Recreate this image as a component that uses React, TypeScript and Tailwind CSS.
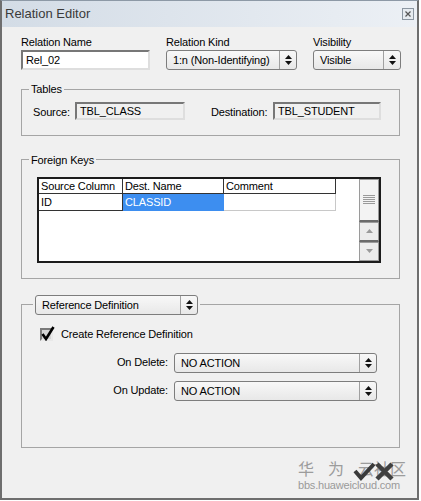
import React from 'react'

// up/down spinner glyph used on the combo boxes
const SpinArrows: React.FC = () => (
  <svg width="7" height="10" viewBox="0 0 7 10">
    <path d="M3.5 0 L7 4 L0 4 Z" fill="#111" />
    <path d="M0 6 L7 6 L3.5 10 Z" fill="#111" />
  </svg>
)

const Combo: React.FC<{ value: string; className?: string }> = ({ value, className = '' }) => (
  <div
    className={`flex h-[20px] items-stretch rounded-[3px] border border-[#7d7d7d] bg-linear-to-b from-[#f8f8f8] to-[#e8e8e8] ${className}`}
  >
    <span className="flex-1 truncate pl-[6px] leading-[18px]">{value}</span>
    <span className="flex w-[17px] items-center justify-center border-l border-[#a0a0a0]">
      <SpinArrows />
    </span>
  </div>
)

const Field: React.FC<{ value: string; readOnly?: boolean; className?: string }> = ({
  value,
  readOnly = false,
  className = '',
}) => (
  <div
    className={`border-2 border-t-[#777] border-l-[#777] border-r-[#dedede] border-b-[#dedede] pl-[3px] ${
      readOnly ? 'bg-[#f0f0f0]' : 'bg-white'
    } ${className}`}
  >
    {value}
  </div>
)

export default function App() {
  return (
    <div className="w-[421px] h-[501px] bg-white font-['Liberation_Sans',Arial,sans-serif] text-[11px] tracking-[-0.15px] text-black">
      <div className="relative flex h-[500px] w-[419px] flex-col border-x-2 border-b-2 border-t border-[#6e6e6e] border-t-[#8d99a6] bg-[#f0f0f0]">
        {/* Title bar */}
        <div className="flex h-[26px] items-center justify-between bg-linear-to-r from-[#d3dce6] to-[#ecf0f5] pl-[3px] pr-[3px]">
          <span className="text-[13px] tracking-normal text-[#3a3a3a]">Relation Editor</span>
          <span className="flex h-[12px] w-[12px] items-center justify-center border border-[#8b96a1] bg-[#e6ebf0]">
            <svg width="6" height="6" viewBox="0 0 6 6">
              <path d="M0.5 0.5 L5.5 5.5 M5.5 0.5 L0.5 5.5" stroke="#555" strokeWidth="1.2" />
            </svg>
          </span>
        </div>

        {/* Body */}
        <div className="flex flex-col pl-[19px] pt-[8px]">
          {/* Name / kind / visibility */}
          <div className="flex">
            <div className="flex w-[129px] flex-col">
              <span className="leading-[14px]">Relation Name</span>
              <Field value="Rel_02" className="mt-[1px] h-[20px] leading-[16px]" />
            </div>
            <div className="ml-[16px] flex w-[131px] flex-col">
              <span className="leading-[14px]">Relation Kind</span>
              <Combo value="1:n (Non-Identifying)" className="mt-[1px]" />
            </div>
            <div className="ml-[16px] flex w-[88px] flex-col">
              <span className="leading-[14px]">Visibility</span>
              <Combo value="Visible" className="mt-[1px]" />
            </div>
          </div>

          {/* Tables */}
          <fieldset className="mt-[12px] w-[379px] border border-[#a5a5a5]">
            <legend className="ml-[7px] px-[2px] leading-[14px]">Tables</legend>
            <div className="flex items-center pb-[14px] pl-[11px] pt-[6px]">
              <span className="w-[42px] pt-[2px]">Source:</span>
              <Field value="TBL_CLASS" readOnly className="h-[18px] w-[110px] leading-[14px]" />
              <span className="ml-[26px] w-[62px] pt-[2px]">Destination:</span>
              <Field value="TBL_STUDENT" readOnly className="h-[18px] w-[108px] leading-[14px]" />
            </div>
          </fieldset>

          {/* Foreign keys grid */}
          <fieldset className="mt-[17px] w-[379px] border border-[#a5a5a5]">
            <legend className="ml-[7px] px-[2px] leading-[14px]">Foreign Keys</legend>
            <div className="pb-[15px] pl-[15px] pt-[10px]">
              <div className="flex h-[86px] w-[344px] border-2 border-[#1c1c1c] bg-white">
                <div className="flex w-[297px] flex-col">
                  <div className="flex h-[15px] border-b border-[#333] leading-[14px]">
                    <span className="w-[84px] border-r border-[#333] pl-[2px]">Source Column</span>
                    <span className="w-[101px] border-r border-[#333] pl-[2px]">Dest. Name</span>
                    <span className="flex-1 border-r border-[#333] pl-[2px]">Comment</span>
                  </div>
                  <div className="flex h-[17px] leading-[16px]">
                    <span className="w-[84px] border-b border-r border-[#333] pl-[2px]">ID</span>
                    <span className="w-[101px] bg-[#3d8ef0] pl-[2px] text-white">CLASSID</span>
                    <span className="flex-1 border-b border-r border-[#c8c8c8]"></span>
                  </div>
                </div>
                <div className="flex-1" />
                {/* vertical scroll bar */}
                <div className="flex w-[20px] flex-col">
                  <div className="flex h-[43px] flex-col items-center justify-center gap-[1px] border border-b-2 border-[#9a9a9a] border-b-[#6a6a6a] bg-[#f3f3f3]">
                    <span className="h-px w-[12px] bg-[#9a9a9a]" />
                    <span className="h-px w-[12px] bg-[#9a9a9a]" />
                    <span className="h-px w-[12px] bg-[#9a9a9a]" />
                    <span className="h-px w-[12px] bg-[#9a9a9a]" />
                    <span className="h-px w-[12px] bg-[#9a9a9a]" />
                  </div>
                  <div className="flex h-[20px] items-center justify-center border border-b-2 border-[#9a9a9a] border-b-[#6a6a6a] bg-[#ececec]">
                    <svg width="7" height="4" viewBox="0 0 7 4">
                      <path d="M3.5 0 L7 4 L0 4 Z" fill="#9a9a9a" />
                    </svg>
                  </div>
                  <div className="flex flex-1 items-center justify-center border border-[#9a9a9a] bg-[#ececec]">
                    <svg width="7" height="4" viewBox="0 0 7 4">
                      <path d="M0 0 L7 0 L3.5 4 Z" fill="#9a9a9a" />
                    </svg>
                  </div>
                </div>
              </div>
            </div>
          </fieldset>

          {/* Reference definition */}
          <fieldset className="mt-[16px] w-[379px] border border-[#a5a5a5]">
            <legend className="ml-[11px] px-[2px]">
              <Combo value="Reference Definition" className="w-[163px]" />
            </legend>
            <div className="flex flex-col pb-[46px] pt-[13px]">
              <label className="flex h-[13px] items-center pl-[18px]">
                <span className="relative h-[13px] w-[13px] border-2 border-t-[#7a7a7a] border-l-[#7a7a7a] border-r-[#e8e8e8] border-b-[#e8e8e8] bg-[#d4d4d4]">
                  <svg className="absolute left-[-1px] top-[-4px]" width="14" height="15" viewBox="0 0 14 15">
                    <path d="M1.5 8 L5 13 L12.5 1" fill="none" stroke="#000" strokeWidth="2.6" strokeLinejoin="miter" />
                  </svg>
                </span>
                <span className="ml-[8px]">Create Reference Definition</span>
              </label>
              <div className="mt-[12px] flex items-center">
                <span className="w-[146px] text-right">On Delete:</span>
                <Combo value="NO ACTION" className="ml-[6px] w-[203px]" />
              </div>
              <div className="mt-[8px] flex items-center">
                <span className="w-[146px] text-right">On Update:</span>
                <Combo value="NO ACTION" className="ml-[6px] w-[203px]" />
              </div>
            </div>
          </fieldset>
        </div>

        {/* Forum watermark and the OK / Cancel marks sitting over it */}
        <div className="absolute left-[296px] top-[457px] flex flex-col text-[#9c9c9c]">
          <div className="flex font-['Noto_Sans_CJK_SC',sans-serif] text-[16px] leading-[20px] tracking-normal">
            <span className="mr-[14px]">华</span>
            <span className="mr-[14px]">为</span>
            <span>云社区</span>
          </div>
          <span className="mt-[1px] text-[11px] leading-[12px] tracking-[-0.2px] text-[#9a9a9a]">bbs.huaweicloud.com</span>
        </div>
        <svg className="absolute left-[350px] top-[459px]" width="46" height="22" viewBox="0 0 46 22">
          <path d="M3 11 L9 18 L22 4" fill="none" stroke="#3a3a3a" strokeWidth="4" />
          <path d="M25 4 L40 19 M40 4 L25 19" fill="none" stroke="#404040" strokeWidth="4.5" />
        </svg>
      </div>
    </div>
  )
}
